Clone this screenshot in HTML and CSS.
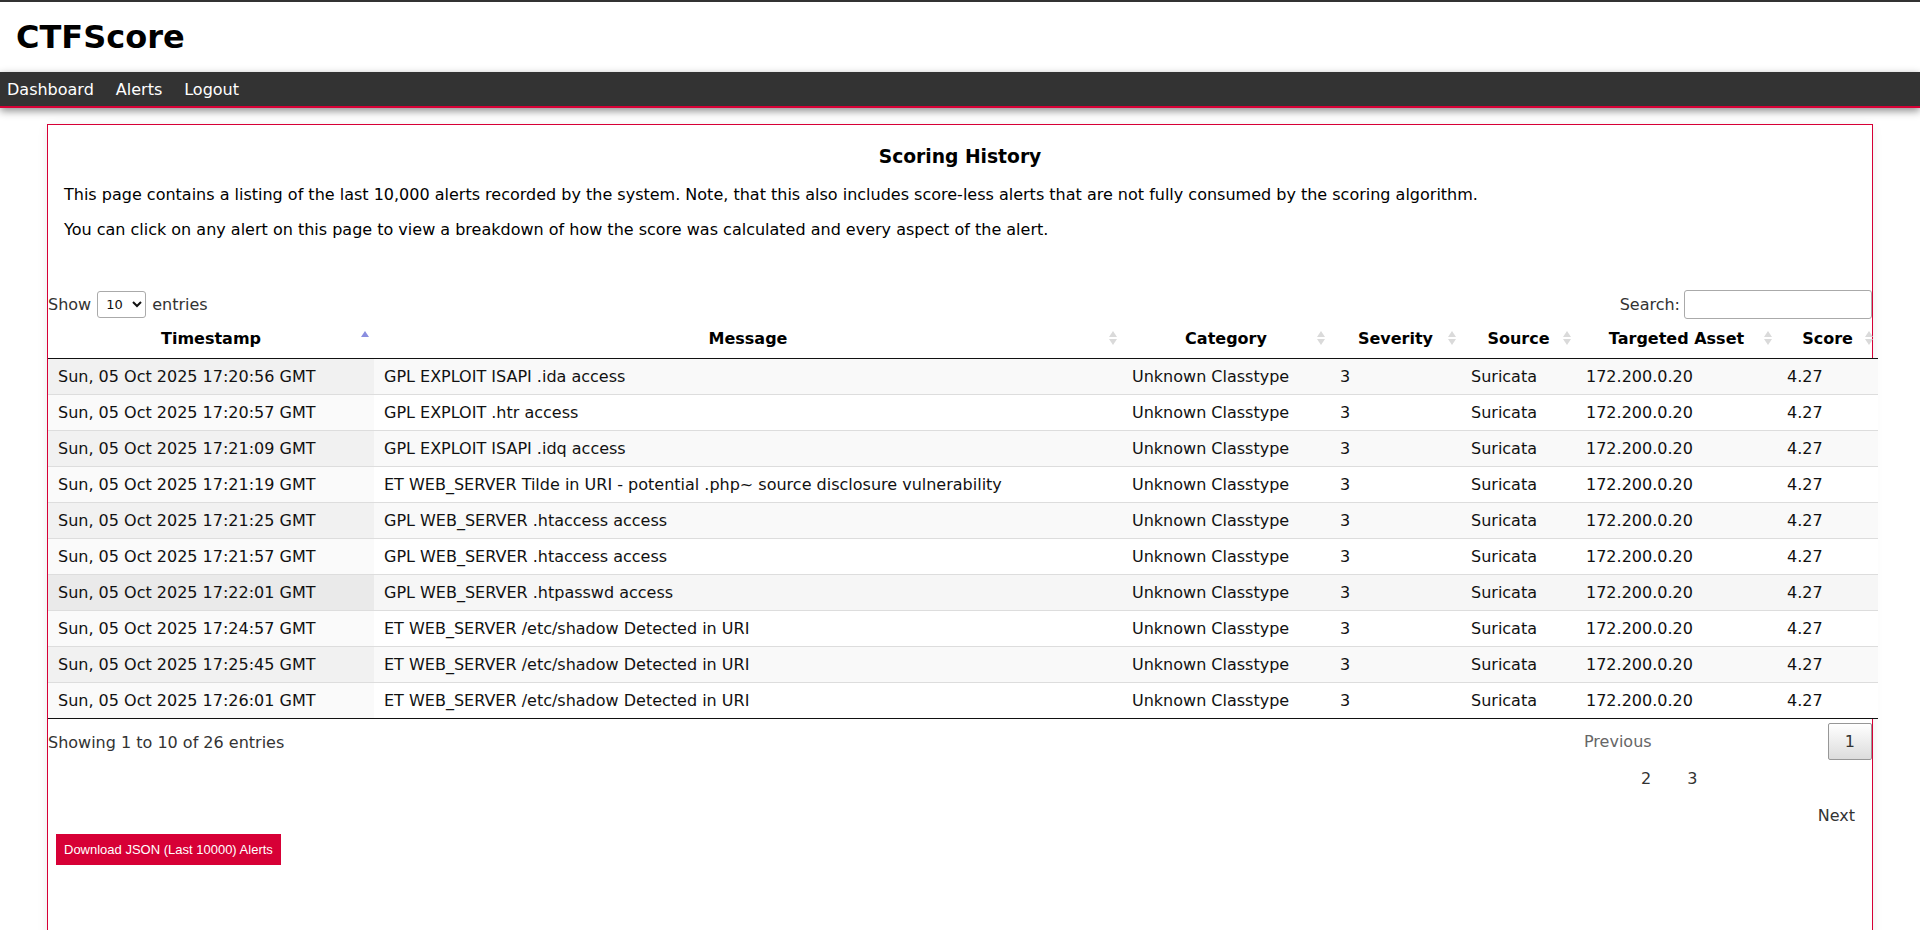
FILE: index.html
```html
<!DOCTYPE html>
<html lang="en">
<head>
<meta charset="utf-8">
<title>CTFScore - Scoring History</title>
<link rel="stylesheet" href="styles.css">
</head>
<body>
<header class="site-header">
  <h1 class="brand">CTFScore</h1>
</header>
<nav class="topnav">
  <a href="#" class="nav-link">Dashboard</a>
  <a href="#" class="nav-link">Alerts</a>
  <a href="#" class="nav-link">Logout</a>
</nav>

<main class="card">
  <section class="intro">
    <h3 class="intro-title">Scoring History</h3>
    <p class="intro-text">This page contains a listing of the last 10,000 alerts recorded by the system. Note, that this also includes score-less alerts that are not fully consumed by the scoring algorithm.</p>
    <p class="intro-text">You can click on any alert on this page to view a breakdown of how the score was calculated and every aspect of the alert.</p>
  </section>

  <div class="dt-wrapper">
    <div class="dt-controls">
      <label class="dt-length">Show <select class="dt-select"><option>10</option><option>25</option><option>50</option><option>100</option></select> entries</label>
      <label class="dt-filter">Search:<input type="search" class="dt-search"></label>
    </div>

    <table class="dt-table">
      <colgroup>
        <col class="w-ts"><col class="w-msg"><col class="w-cat"><col class="w-sev"><col class="w-src"><col class="w-asset"><col class="w-score">
      </colgroup>
      <thead>
        <tr>
          <th class="sort sort-asc">Timestamp</th>
          <th class="sort">Message</th>
          <th class="sort">Category</th>
          <th class="sort">Severity</th>
          <th class="sort">Source</th>
          <th class="sort">Targeted Asset</th>
          <th class="sort">Score</th>
        </tr>
      </thead>
      <tbody>
        <tr class="odd"><td class="sorted">Sun, 05 Oct 2025 17:20:56 GMT</td><td>GPL EXPLOIT ISAPI .ida access</td><td>Unknown Classtype</td><td>3</td><td>Suricata</td><td>172.200.0.20</td><td>4.27</td></tr>
        <tr class="even"><td class="sorted">Sun, 05 Oct 2025 17:20:57 GMT</td><td>GPL EXPLOIT .htr access</td><td>Unknown Classtype</td><td>3</td><td>Suricata</td><td>172.200.0.20</td><td>4.27</td></tr>
        <tr class="odd"><td class="sorted">Sun, 05 Oct 2025 17:21:09 GMT</td><td>GPL EXPLOIT ISAPI .idq access</td><td>Unknown Classtype</td><td>3</td><td>Suricata</td><td>172.200.0.20</td><td>4.27</td></tr>
        <tr class="even"><td class="sorted">Sun, 05 Oct 2025 17:21:19 GMT</td><td>ET WEB_SERVER Tilde in URI - potential .php~ source disclosure vulnerability</td><td>Unknown Classtype</td><td>3</td><td>Suricata</td><td>172.200.0.20</td><td>4.27</td></tr>
        <tr class="odd"><td class="sorted">Sun, 05 Oct 2025 17:21:25 GMT</td><td>GPL WEB_SERVER .htaccess access</td><td>Unknown Classtype</td><td>3</td><td>Suricata</td><td>172.200.0.20</td><td>4.27</td></tr>
        <tr class="even"><td class="sorted">Sun, 05 Oct 2025 17:21:57 GMT</td><td>GPL WEB_SERVER .htaccess access</td><td>Unknown Classtype</td><td>3</td><td>Suricata</td><td>172.200.0.20</td><td>4.27</td></tr>
        <tr class="odd hovered"><td class="sorted">Sun, 05 Oct 2025 17:22:01 GMT</td><td>GPL WEB_SERVER .htpasswd access</td><td>Unknown Classtype</td><td>3</td><td>Suricata</td><td>172.200.0.20</td><td>4.27</td></tr>
        <tr class="even"><td class="sorted">Sun, 05 Oct 2025 17:24:57 GMT</td><td>ET WEB_SERVER /etc/shadow Detected in URI</td><td>Unknown Classtype</td><td>3</td><td>Suricata</td><td>172.200.0.20</td><td>4.27</td></tr>
        <tr class="odd"><td class="sorted">Sun, 05 Oct 2025 17:25:45 GMT</td><td>ET WEB_SERVER /etc/shadow Detected in URI</td><td>Unknown Classtype</td><td>3</td><td>Suricata</td><td>172.200.0.20</td><td>4.27</td></tr>
        <tr class="even"><td class="sorted">Sun, 05 Oct 2025 17:26:01 GMT</td><td>ET WEB_SERVER /etc/shadow Detected in URI</td><td>Unknown Classtype</td><td>3</td><td>Suricata</td><td>172.200.0.20</td><td>4.27</td></tr>
      </tbody>
    </table>

    <div class="dt-footer">
      <div class="dt-info">Showing 1 to 10 of 26 entries</div>
      <div class="dt-paginate">
        <div class="pg-row pg-row-first">
          <a class="pg-btn pg-disabled">Previous</a>
          <a class="pg-btn pg-current">1</a>
        </div>
        <div class="pg-row pg-row-mid">
          <a class="pg-btn">2</a><a class="pg-btn">3</a>
        </div>
        <div class="pg-row pg-row-last">
          <a class="pg-btn">Next</a>
        </div>
      </div>
    </div>
  </div>

  <div class="actions">
    <button class="download-btn" type="button">Download JSON (Last 10000) Alerts</button>
  </div>
</main>
</body>
</html>
```

FILE: styles.css
```css
html, body {
  margin: 0;
  padding: 0;
  background: #ffffff;
}

body {
  font-family: "DejaVu Sans", "Liberation Sans", sans-serif;
  font-size: 16px;
  color: #111;
}

.site-header {
  border-top: 2px solid #333;
  height: 70px;
  display: flex;
  align-items: center;
  padding-left: 16px;
}

.brand {
  margin: 0;
  font-size: 32px;
  font-weight: bold;
  line-height: 37px;
  color: #000;
}

.topnav {
  background: #333333;
  height: 34px;
  border-bottom: 2px solid #d70036;
  display: flex;
  align-items: center;
  gap: 22px;
  padding-left: 7px;
  box-shadow: 0 3px 8px rgba(0, 0, 0, 0.45);
  position: relative;
  z-index: 2;
}

.nav-link {
  color: #ffffff;
  text-decoration: none;
  font-size: 16px;
  line-height: 19px;
}

.card {
  display: block;
  width: 95%;
  margin: 16px auto 0;
  border: 1px solid #d70036;
  box-shadow: 0 2px 10px rgba(0, 0, 0, 0.08);
  padding-bottom: 120px;
  background: #fff;
}

.intro {
  padding: 2px 16px 1px;
}

.intro-title {
  font-size: 18.72px;
  font-weight: bold;
  text-align: center;
  margin: 18.72px 0;
  color: #000;
}

.intro-text {
  margin: 16px 0;
  color: #000;
}

.dt-wrapper {
  margin-top: 33px;
}

.dt-controls {
  height: 30px;
  display: flex;
  align-items: center;
  justify-content: space-between;
  color: #333;
}

.dt-length {
  display: flex;
  align-items: center;
  gap: 6px;
}

.dt-select {
  width: 49px;
  height: 27px;
  border: 1px solid #aaa;
  border-radius: 3px;
  padding: 0 2px 0 4px;
  font-size: 13px;
  font-family: "DejaVu Sans", sans-serif;
  background: #fff;
  color: #111;
}

.dt-filter {
  display: flex;
  align-items: center;
}

.dt-search {
  margin-left: 4px;
  width: 188px;
  height: 29px;
  box-sizing: border-box;
  border: 1px solid #aaa;
  border-radius: 3px;
  padding: 4px;
  background: #fff;
}

.dt-table {
  width: calc(100% + 6px);
  table-layout: fixed;
  border-collapse: collapse;
  border-spacing: 0;
  border-bottom: 1px solid #111;
}

.w-ts { width: 326px; }
.w-msg { width: 748px; }
.w-cat { width: 208px; }
.w-sev { width: 131px; }
.w-src { width: 115px; }
.w-asset { width: 201px; }
.w-score { width: 101px; }

.dt-table th {
  position: relative;
  padding: 10px 18px;
  line-height: 19px;
  font-weight: bold;
  text-align: center;
  color: #000;
  border-bottom: 1px solid #111;
  white-space: nowrap;
}

.sort::before,
.sort::after {
  content: "";
  position: absolute;
  right: 5px;
  width: 0;
  height: 0;
  border-left: 4px solid transparent;
  border-right: 4px solid transparent;
}

.sort::before {
  top: 12px;
  border-bottom: 6px solid #dadada;
}

.sort::after {
  top: 20px;
  border-top: 6px solid #dadada;
}

.sort-asc::before {
  border-bottom-color: #8a8ee0;
}

.sort-asc::after {
  border-top-color: transparent;
}

.dt-table td {
  padding: 8px 10px;
  line-height: 19px;
  border-top: 1px solid #ddd;
  white-space: nowrap;
  overflow: hidden;
  color: #111;
}

.dt-table tbody tr:first-child td {
  border-top: none;
}

.dt-table tr.odd td {
  background: #f9f9f9;
}

.dt-table tr.odd td.sorted {
  background: #f1f1f1;
}

.dt-table tr.even td {
  background: #ffffff;
}

.dt-table tr.even td.sorted {
  background: #fafafa;
}

.dt-table tr.hovered td {
  background: #f6f6f6;
}

.dt-table tr.hovered td.sorted {
  background: #eaeaea;
}

.dt-footer {
  display: flex;
  justify-content: space-between;
  align-items: flex-start;
  color: #333;
}

.dt-info {
  padding-top: 14px;
  line-height: 19px;
}

.dt-paginate {
  width: 305px;
  padding-top: 4px;
}

.pg-row {
  display: flex;
  height: 37px;
}

.pg-row-first {
  justify-content: space-between;
}

.pg-row-mid {
  padding-left: 57px;
  gap: 2px;
}

.pg-row-last {
  justify-content: flex-end;
}

.pg-btn {
  display: inline-block;
  box-sizing: border-box;
  min-width: 1.5em;
  padding: 8px 16px;
  line-height: 19px;
  height: 37px;
  text-align: center;
  border: 1px solid transparent;
  border-radius: 2px;
  color: #333;
  cursor: pointer;
}

.pg-disabled {
  color: #666;
}

.pg-current {
  border: 1px solid #979797;
  background: linear-gradient(to bottom, #ffffff 0%, #dcdcdc 100%);
  color: #333;
}

.actions {
  padding-left: 8px;
}

.download-btn {
  display: inline-block;
  background: #d70036;
  color: #ffffff;
  border: none;
  border-radius: 0;
  font-family: "Liberation Sans", "Open Sans", sans-serif;
  font-size: 13px;
  line-height: 15px;
  padding: 8px 8px;
  height: 31px;
  cursor: pointer;
}
```
